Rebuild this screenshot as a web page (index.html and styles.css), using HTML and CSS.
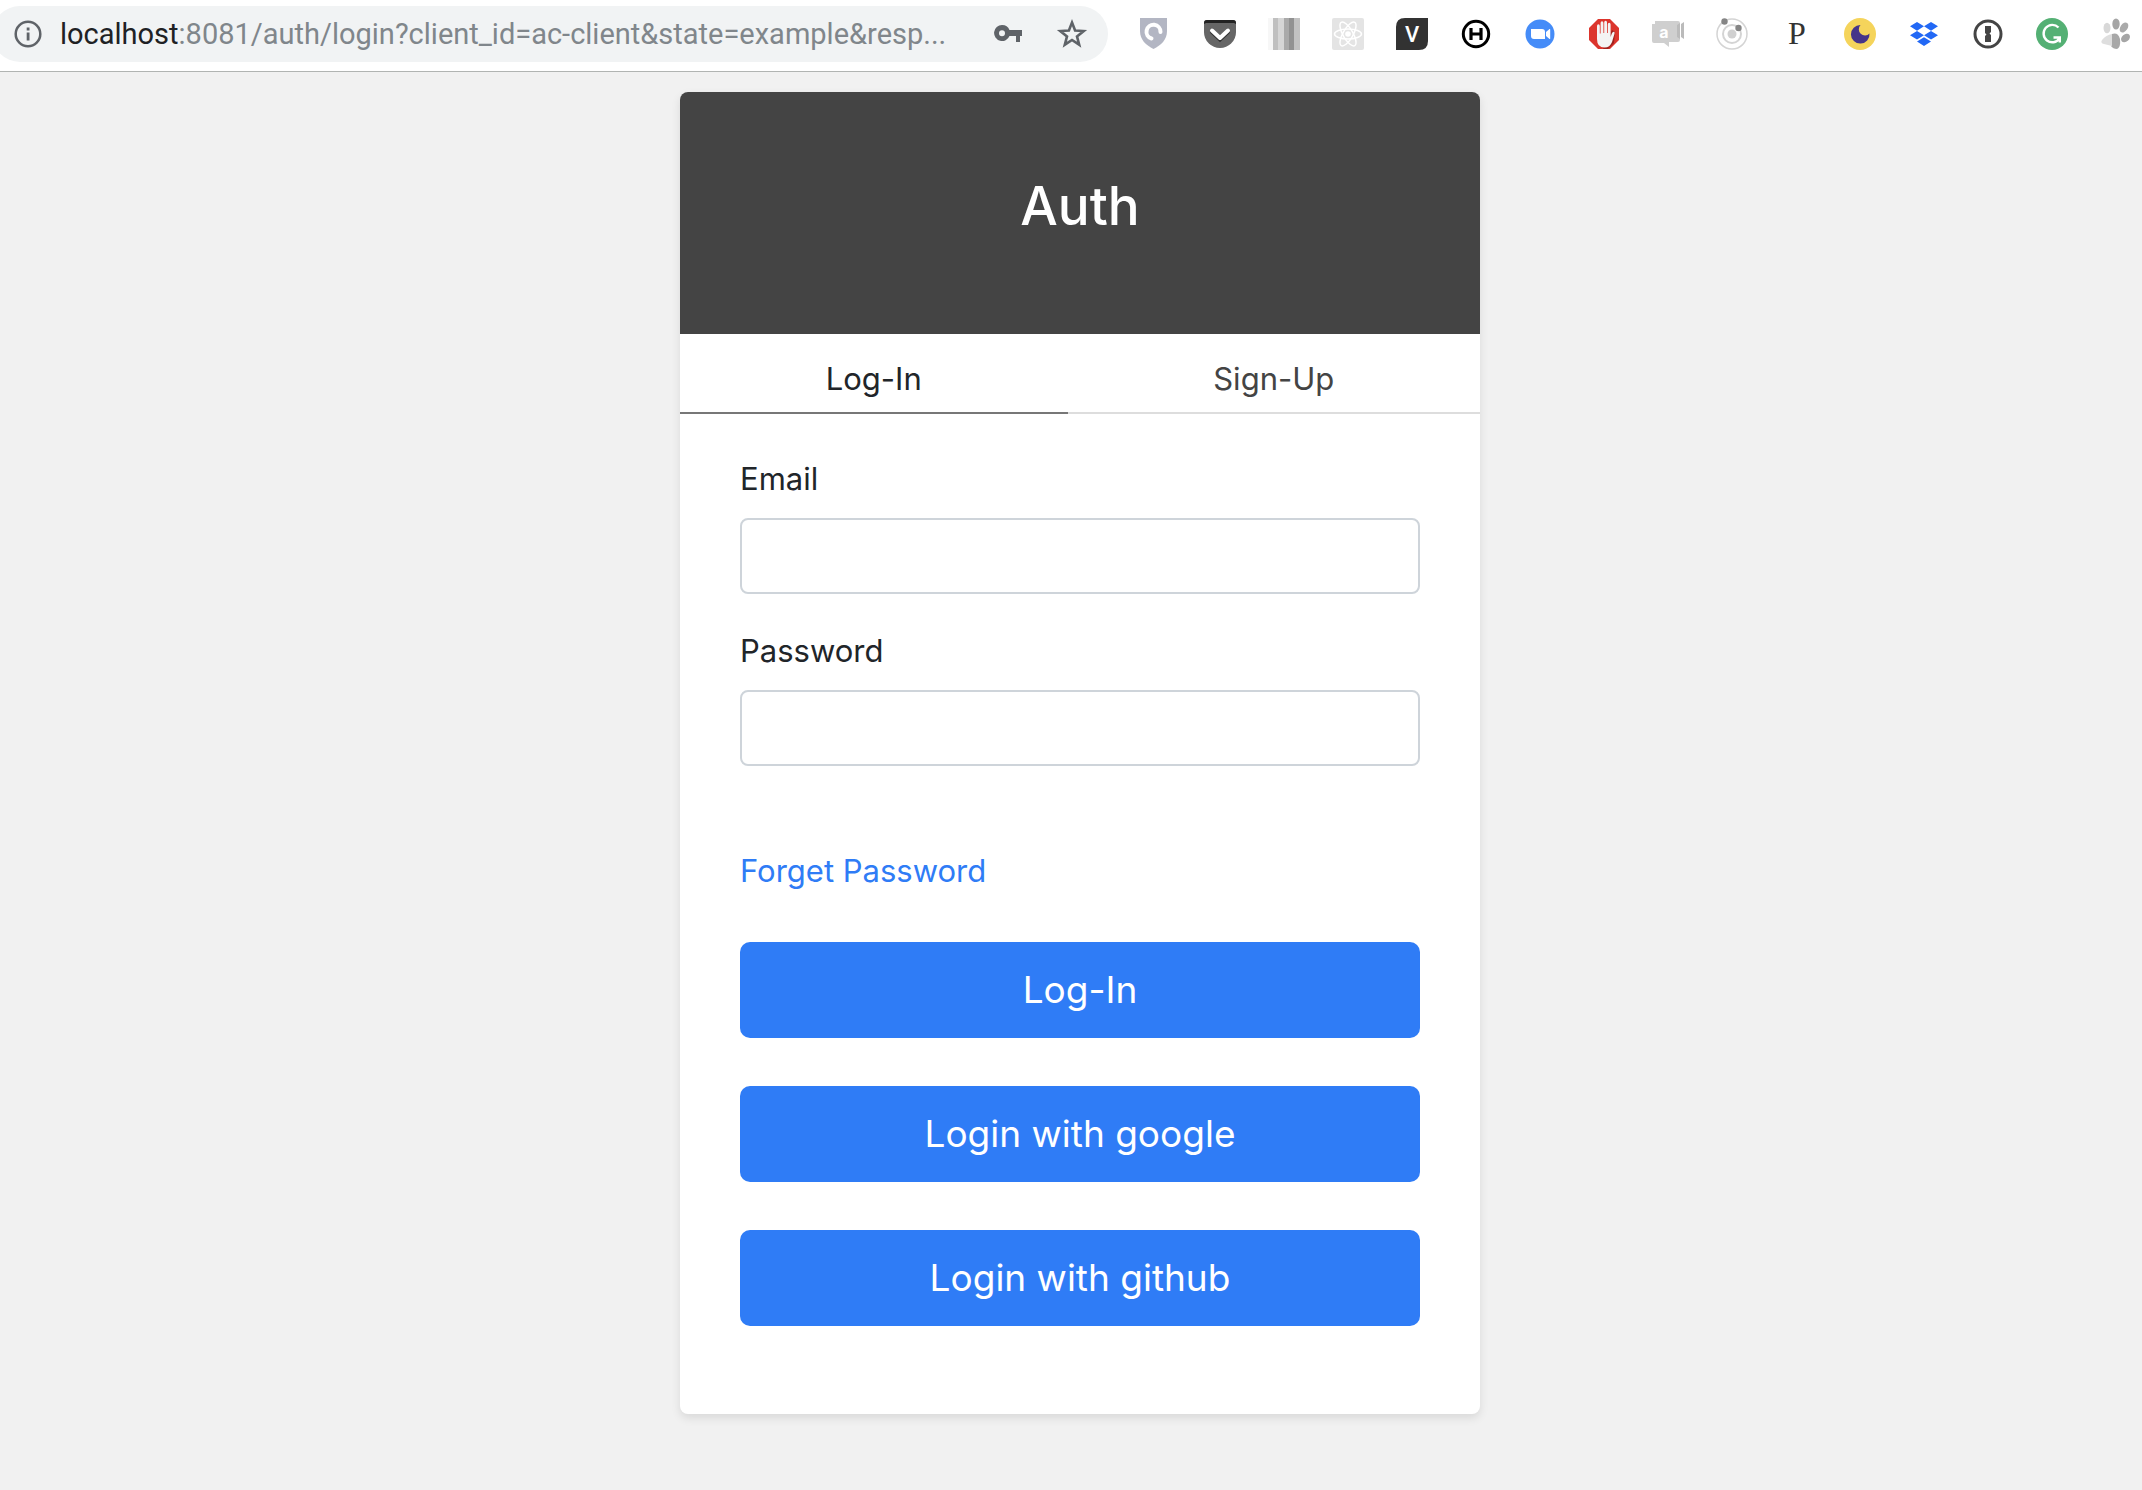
FILE: index.html
```html
<!DOCTYPE html>
<html lang="en">
<head>
<meta charset="utf-8">
<meta name="viewport" content="width=device-width, initial-scale=1">
<title>Auth</title>
<link rel="stylesheet" href="styles.css">
</head>
<body>
<header class="toolbar">
  <div class="omnibox">
    <svg class="omnibox-icon" viewBox="0 0 28 28" aria-hidden="true"><circle cx="14" cy="14" r="12.3" fill="none" stroke="#5f6368" stroke-width="2.5"/><path d="M12.7 7.6h2.8v2.8h-2.8zM12.7 12.6h2.8v8h-2.8z" fill="#5f6368"/></svg>
    <div class="url" role="textbox" aria-label="Address" tabindex="0"><span class="url-host">localhost</span>:8081/auth/login?client_id=ac-client&amp;state=example&amp;resp...</div>
    <button class="icon-button" type="button" aria-label="Saved passwords"><svg viewBox="0 0 32 32"><path fill="#5f6368" fill-rule="evenodd" d="M10 7a8 8 0 1 0 7.500 11H24v6h4v-6h2v-6H17.500A8 8 0 0 0 10 7zm0 5.200a3 3 0 1 1 0 6 3 3 0 0 1 0-6z"/></svg></button>
    <button class="icon-button" type="button" aria-label="Bookmark"><svg viewBox="0 0 32 32"><path d="M16 4.500l3.100 8 8.600.5-6.700 5.400 2.200 8.300L16 22l-7.200 4.700 2.200-8.300L4.300 13l8.600-.5z" fill="none" stroke="#5f6368" stroke-width="2.600"/></svg></button>
  </div>
  <nav class="extensions" aria-label="Extensions">
    <svg viewBox="0 0 32 32"><path d="M0 0h27v13c0 9-6 14-13.500 18C6 27 0 22 0 13z" fill="#b3b6c3"/><path d="M20.500 14a7 7 0 1 0-9 6.500" fill="none" stroke="#fff" stroke-width="4" stroke-linecap="round"/></svg>
    <svg viewBox="0 0 32 32"><path d="M3 2h26q3 0 3 3v9a16 16 0 0 1-32 0V5q0-3 3-3z" fill="#666"/><path d="M0 6V5q0-3 3-3h26q3 0 3 3v1l-2-1H2z" fill="#222"/><path d="M8 14l8 7.500 8-7.500" fill="none" stroke="#333" stroke-width="4" stroke-linecap="round"/><path d="M8 12.500l8 7.500 8-7.500" fill="none" stroke="#fff" stroke-width="4" stroke-linecap="round" stroke-linejoin="round"/></svg>
    <svg viewBox="0 0 32 32"><path fill="#f7f7f7" d="M0 0h5v32H0z"/><path fill="#c0c0c0" d="M5 0h5v32H5z"/><path fill="#d6d6d6" d="M10 0h6v32h-6z"/><path fill="#aaa" d="M16 0h5v32h-5z"/><path fill="#929292" d="M21 0h5v32h-5z"/><path fill="#c2c2c2" d="M26 0h6v32h-6z"/></svg>
    <svg viewBox="0 0 32 32"><rect width="32" height="32" rx="2" fill="#e4e4e4"/><g fill="none" stroke="#fff" stroke-width="1.500"><ellipse cx="16" cy="16" rx="13.500" ry="5"/><ellipse cx="16" cy="16" rx="13.500" ry="5" transform="rotate(60 16 16)"/><ellipse cx="16" cy="16" rx="13.500" ry="5" transform="rotate(120 16 16)"/></g><circle cx="16" cy="16" r="2.800" fill="#fff"/></svg>
    <svg viewBox="0 0 32 32"><path d="M9 0h23v23q0 9-9 9H0V9q0-9 9-9z" fill="#323232"/><text class="mark mark-v" x="16" y="24">V</text></svg>
    <svg viewBox="0 0 32 32"><circle cx="16" cy="16" r="12.700" fill="#fff" stroke="#000" stroke-width="3"/><path d="M11 10v12M21 10v12M11 16h10" stroke="#000" stroke-width="3.200"/></svg>
    <svg viewBox="0 0 32 32"><circle cx="16" cy="16" r="14.500" fill="#458cf8"/><path d="M7 11h11q3 0 3 3v7H10q-3 0-3-3zM22 14l3.500-3q.7-.4.700.5v9q0 .9-.7.500L22 18z" fill="#fff"/></svg>
    <svg viewBox="0 0 32 32"><path d="M10 1h12l9 9v12l-9 9H10l-9-9V10z" fill="#dc352d"/><path d="M24 12l3 2-1 11-6 6h-5z" fill="#9e211c"/><path d="M9 8q0-1.700 1.400-1.700T11.800 8v7.500h.8V5q0-1.700 1.400-1.700T15.400 5v10h.8V4.500q0-1.700 1.400-1.700T19 4.500V15h.8V6.500q0-1.700 1.400-1.700t1.400 1.700V19l1.200-3.500q.8-2 2.300-1.700.8.400.400 2L24 24q-2 5.500-7.500 5.500Q9 29.500 9 21z" fill="#f4f4f4"/></svg>
    <svg viewBox="0 0 32 32"><path d="M3 3h23q2 0 2 2v17q0 2-2 2H17v5l-5-4H2q-2 0-2-2V6h3z" fill="#cfcfcf"/><path d="M25 7l3-2v16l-3-2zM29 6l3-2v17l-3-2z" fill="#bbb"/><text class="mark mark-a" x="12" y="20">a</text></svg>
    <svg viewBox="0 0 32 32"><g fill="none" stroke="#d4d4d4"><circle cx="16" cy="16" r="15" stroke-width="1.500"/><circle cx="16" cy="16" r="9" stroke-width="2"/></g><circle cx="16" cy="16" r="4.500" fill="#d0d0d0"/><circle cx="8.500" cy="3.500" r="3.200" fill="#858585"/><circle cx="22.500" cy="10" r="3.200" fill="#858585"/></svg>
    <svg viewBox="0 0 32 32"><text class="mark mark-p" x="17" y="26">P</text></svg>
    <svg viewBox="0 0 32 32"><circle cx="16" cy="16" r="16" fill="#f5d45b"/><path d="M16.500 7A9.300 9.300 0 1 0 25.500 15.500 6 6 0 1 1 16.500 7z" fill="#463489"/></svg>
    <svg viewBox="0 0 32 32"><path fill="#2268f5" d="M9 4l7 4.300-7 4.400-7-4.400zM23 4l7 4.300-7 4.400-7-4.400zM9 12.900l7 4.400-7 4.300-7-4.300zM23 12.900l7 4.400-7 4.300-7-4.300zM16 19.200l7 4.300-7 4.500-7-4.500z"/></svg>
    <svg viewBox="0 0 32 32"><circle cx="16" cy="16" r="13" fill="#fff" stroke="#444" stroke-width="3"/><path d="M13 8h6v6l-1.500 1.500L19 17v7h-6v-6l1.500-1.500L13 15z" fill="#444"/></svg>
    <svg viewBox="0 0 32 32"><circle cx="16" cy="16" r="16" fill="#54b074"/><path d="M22.500 9.500A8.700 8.700 0 1 0 23.500 20.500M17.500 19.500h6.300v5" fill="none" stroke="#fff" stroke-width="2.400"/></svg>
    <svg viewBox="0 0 32 32"><path d="M12 16q6-2 8 5 1 8-3 10-4 0-6-3V18z" fill="#a8a8a8"/><path d="M12 16v12l-8-2q-4-1-2-4 4-5 10-6z" fill="#dedede"/><ellipse cx="7" cy="10" rx="3.500" ry="5.200" fill="#d8d8d8"/><ellipse cx="16" cy="6" rx="3.700" ry="5.500" fill="#a5a5a5"/><ellipse cx="24" cy="9.500" rx="3.600" ry="5.500" transform="rotate(35 24 9.500)" fill="#aaa"/><ellipse cx="25.500" cy="20" rx="3.600" ry="5" transform="rotate(50 25.500 20)" fill="#a5a5a5"/></svg>
  </nav>
</header>
<main class="page">
  <section class="card">
    <div class="card-header"><h1 class="card-title">Auth</h1></div>
    <nav class="tabs">
      <a class="tab tab-active" href="#login">Log-In</a>
      <a class="tab" href="#signup">Sign-Up</a>
    </nav>
    <form class="form" id="login">
      <div class="field">
        <label for="email">Email</label>
        <input id="email" type="email">
      </div>
      <div class="field">
        <label for="password">Password</label>
        <input id="password" type="password">
      </div>
      <a class="forget" href="#forget">Forget Password</a>
      <div class="actions">
        <button class="button" type="submit">Log-In</button>
        <button class="button" type="button">Login with google</button>
        <button class="button" type="button">Login with github</button>
      </div>
    </form>
  </section>
</main>
</body>
</html>
```
FILE: styles.css
```css
*, *::before, *::after { box-sizing: border-box; }

body {
  margin: 0;
  min-height: 100vh;
  background: #f1f1f1;
  color: #212529;
  font: 31px/50px Inter, "Liberation Sans", sans-serif;
}

.toolbar {
  display: flex;
  align-items: center;
  gap: 32px;
  padding: 6px 10px 9px 0;
  background: #fff;
  border-bottom: 1px solid #b1b4b2;
}

.omnibox {
  display: flex;
  align-items: center;
  flex: 1 1 0;
  min-width: 0;
  height: 56px;
  margin-left: -8px;
  padding: 0 20px 0 22px;
  border-radius: 28px;
  background: #f1f3f4;
}

.omnibox-icon { flex: none; width: 28px; height: 28px; }

.url {
  flex: 1 1 0;
  min-width: 0;
  margin-left: 18px;
  overflow: hidden;
  white-space: nowrap;
  color: #80868b;
  font: 29px/40px Roboto, "Liberation Sans", sans-serif;
}

.url-host { color: #202124; }

.icon-button {
  flex: none;
  width: 32px;
  height: 32px;
  margin-left: 32px;
  padding: 0;
  border: 0;
  background: none;
}

.icon-button svg { display: block; width: 32px; height: 32px; }

.extensions { display: flex; flex: none; gap: 32px; }
.extensions svg { display: block; width: 32px; height: 32px; overflow: visible; }

.mark { text-anchor: middle; fill: #fff; }
.mark-v { font: 500 22px Roboto, sans-serif; }
.mark-a { font: 700 16px Inter, sans-serif; }
.mark-p { font: 32px "Liberation Serif", serif; fill: #333; }

.page { padding: 20px 0 76px 18px; }

.card {
  max-width: 800px;
  margin: 0 auto;
  overflow: hidden;
  border-radius: 8px;
  background: #fff;
  box-shadow: 0 4px 10px rgba(0, 0, 0, .1);
}

.card-header { padding: 78px 40px 92px; background: #444; }

.card-title {
  margin: 0;
  color: #fff;
  font-size: 53px;
  font-weight: 500;
  line-height: 72px;
  text-align: center;
}

.tabs { display: flex; }

.tab {
  flex: 1 1 auto;
  padding: 20px 0 8px;
  border-bottom: 2px solid #ddd;
  color: #444;
  text-align: center;
  text-decoration: none;
}

.tab-active { border-color: #777; color: #212529; }

.form { padding: 40px 60px 88px; }

.field { margin-bottom: 32px; }
.field label { display: block; margin-bottom: 14px; }

.field input {
  display: block;
  width: 100%;
  height: 76px;
  padding: 12px 24px;
  border: 2px solid #ced4da;
  border-radius: 8px;
  background: #fff;
  color: #495057;
  font: inherit;
}

.forget {
  display: block;
  width: fit-content;
  margin-top: 80px;
  color: #2f7cf6;
  text-decoration: none;
}

.actions { display: grid; gap: 48px; margin-top: 46px; }

.button {
  width: 100%;
  padding: 18px 32px;
  border: 0;
  border-radius: 10px;
  background: #2f7cf6;
  color: #fff;
  font: 37px/60px Inter, "Liberation Sans", sans-serif;
}
```
